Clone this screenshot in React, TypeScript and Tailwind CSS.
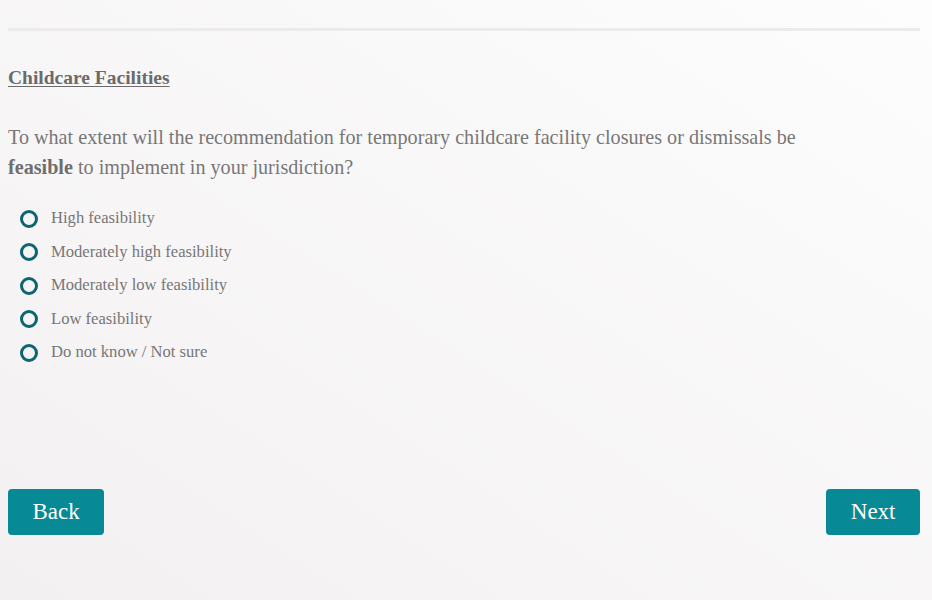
import React, { useState } from "react";

const options = [
  "High feasibility",
  "Moderately high feasibility",
  "Moderately low feasibility",
  "Low feasibility",
  "Do not know / Not sure",
];

const App: React.FC = () => {
  const [selected, setSelected] = useState<number | null>(null); // chosen answer

  return (
    <div
      className="min-h-screen w-full bg-linear-to-tr from-[#f3f0f1] to-[#fdfdfd] pl-2 pr-3 pt-7 text-[#777777]"
      style={{ fontFamily: '"Liberation Serif", "Times New Roman", serif' }}
    >
      <div className="h-[3px] w-full bg-[#ebebee]" />

      <h2 className="mt-[34px] text-[19.5px] font-bold leading-[25px] text-[#6b6b6b] underline underline-offset-2">
        Childcare Facilities
      </h2>

      <p className="mt-[32px] text-[20.15px] leading-[30px]">
        To what extent will the recommendation for temporary childcare facility closures or dismissals be
        <br />
        <span className="font-bold text-[#6e6e6e]">feasible</span> to implement in your jurisdiction?
      </p>

      <div className="mt-[20px] flex flex-col">
        {options.map((opt, i) => (
          <label
            key={opt}
            className="flex h-[33.5px] cursor-pointer items-center pl-[12px]"
            onClick={() => setSelected(i)}
          >
            <span className="flex h-[18px] w-[18px] items-center justify-center rounded-full border-[3px] border-[#0b6670]">
              {selected === i && <span className="h-[8px] w-[8px] rounded-full bg-[#0b6670]" />}
            </span>
            <span className="ml-[13px] text-[16.6px]">{opt}</span>
          </label>
        ))}
      </div>

      <div className="mt-[119px] flex justify-between">
        <button className="h-[46px] rounded-[4px] bg-[#088a96] px-[24.5px] pt-[2px] text-[23px] text-white">
          Back
        </button>
        <button className="h-[46px] rounded-[4px] bg-[#088a96] px-[24.5px] pt-[2px] text-[23px] text-white">
          Next
        </button>
      </div>
    </div>
  );
};

export default App;
